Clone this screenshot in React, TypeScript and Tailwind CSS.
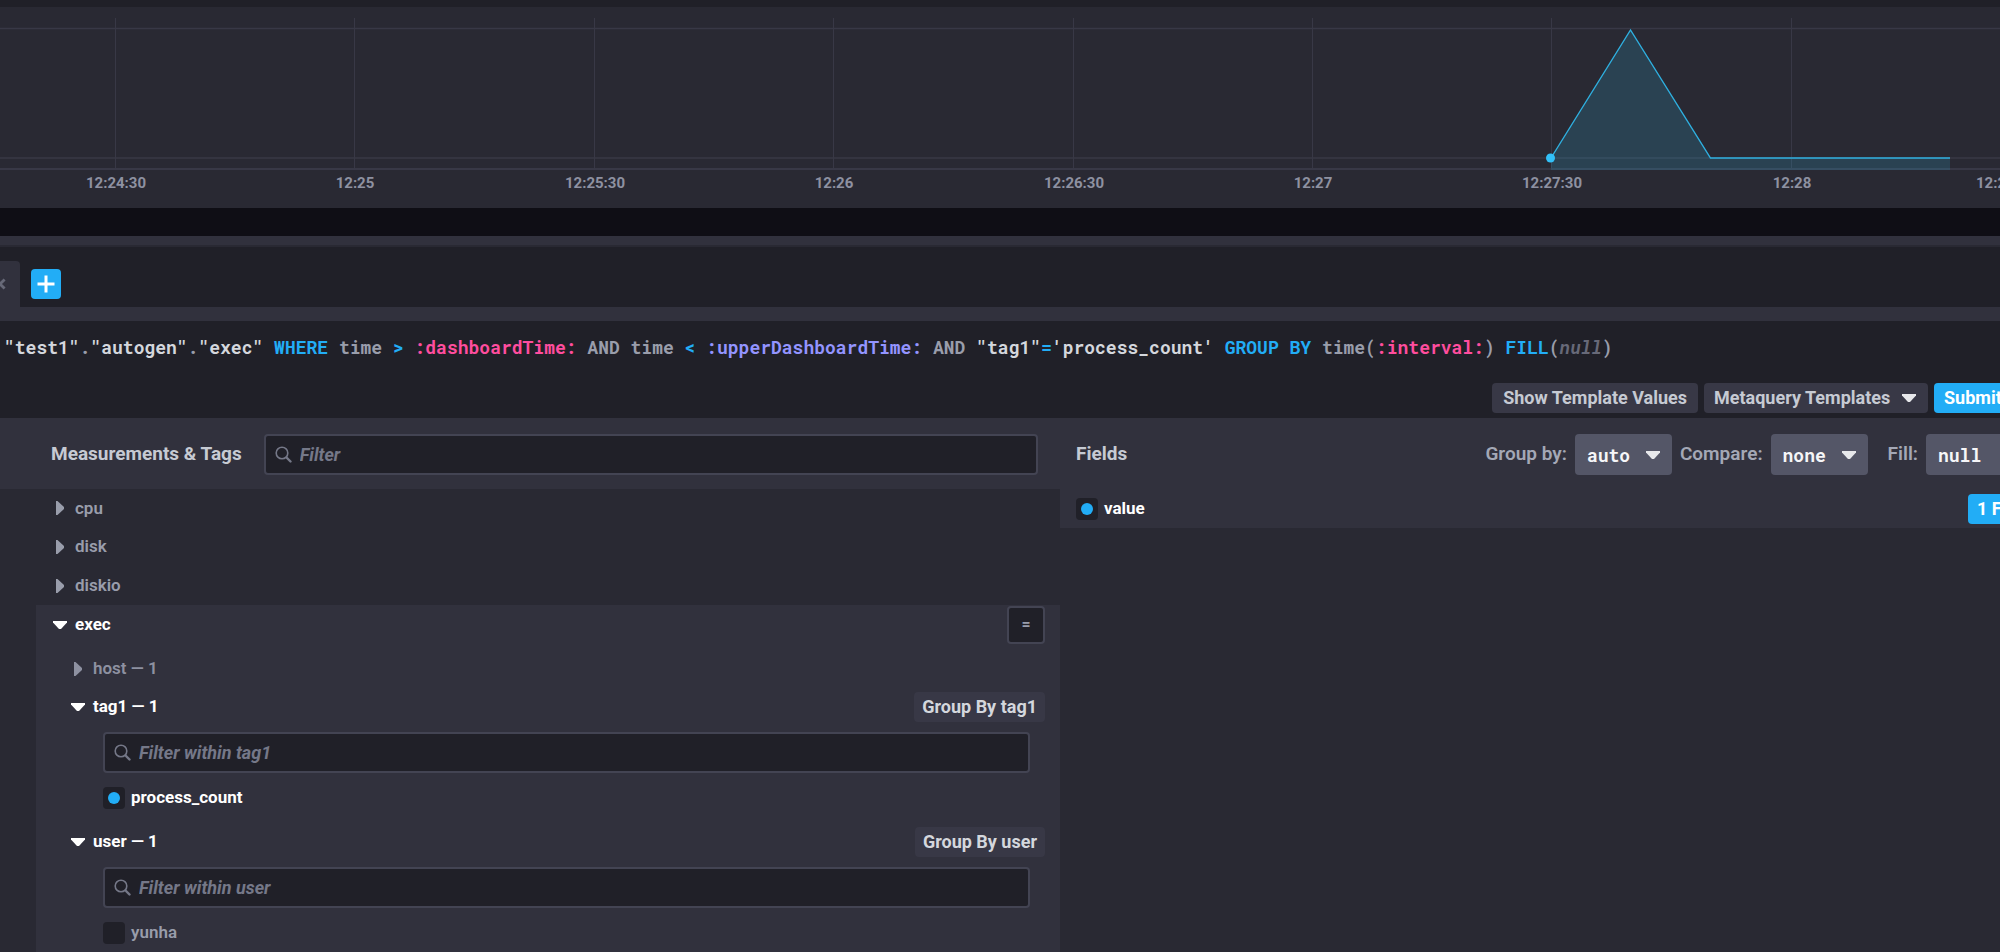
import { useState } from "react";

type Token = {
  text: string;
  style: string;
};

const PLAIN = "text-[#999dab]";
const NAME = "text-[#d4d7dd]";
const KEYWORD = "text-[#22adf6]";
const TEMPLATE = "text-[#ff4d9e]";
const UPPER = "text-[#9394ff]";

const queryTokens: Array<Token> = [
  { text: '"test1"', style: NAME },
  { text: ".", style: PLAIN },
  { text: '"autogen"', style: NAME },
  { text: ".", style: PLAIN },
  { text: '"exec"', style: NAME },
  { text: " WHERE", style: KEYWORD },
  { text: " time", style: PLAIN },
  { text: " > ", style: KEYWORD },
  { text: ":dashboardTime:", style: TEMPLATE },
  { text: " AND time", style: PLAIN },
  { text: " < ", style: KEYWORD },
  { text: ":upperDashboardTime:", style: UPPER },
  { text: " AND ", style: PLAIN },
  { text: '"tag1"', style: NAME },
  { text: "=", style: KEYWORD },
  { text: "'process_count'", style: NAME },
  { text: " GROUP BY", style: KEYWORD },
  { text: " time(", style: PLAIN },
  { text: ":interval:", style: TEMPLATE },
  { text: ")", style: PLAIN },
  { text: " FILL", style: KEYWORD },
  { text: "(", style: PLAIN },
  { text: "null", style: "italic text-[#676978]" },
  { text: ")", style: PLAIN },
];

const ticks = [
  { x: 116, label: "12:24:30" },
  { x: 355, label: "12:25" },
  { x: 595, label: "12:25:30" },
  { x: 834, label: "12:26" },
  { x: 1074, label: "12:26:30" },
  { x: 1313, label: "12:27" },
  { x: 1552, label: "12:27:30" },
  { x: 1792, label: "12:28" },
  { x: 2006, label: "12:28:30" },
];

const measurements = ["cpu", "disk", "diskio"];

const Graph = () => (
  <svg className="block h-[201px] w-full bg-[#292933]" role="img" aria-label="exec value over time">
    <g stroke="#383846" strokeWidth="1">
      {ticks.slice(0, 8).map((tick) => (
        <line key={tick.label} x1={tick.x - 0.5} x2={tick.x - 0.5} y1="11" y2="161" />
      ))}
      <line x1="0" x2="100%" y1="21.5" y2="21.5" strokeWidth="1.4" />
      <line x1="0" x2="100%" y1="151" y2="151" strokeWidth="1.4" />
      <line x1="0" x2="100%" y1="162" y2="162" strokeWidth="2" />
    </g>
    <path d="M1551 151 L1630.5 23 L1710.5 151 H1950 V163 H1551 Z" fill="#32b8e6" fillOpacity="0.18" />
    <path d="M1551 151 L1630.5 23 L1710.5 151 H1950" fill="none" stroke="#2fb0e0" strokeWidth="1.4" />
    <circle cx="1550.5" cy="151" r="4.5" fill="#32c0f8" />
    <g fill="#8e91a1" fontSize="15" fontWeight="700" textAnchor="middle">
      {ticks.map((tick) => (
        <text key={tick.label} x={tick.x} y="181">
          {tick.label}
        </text>
      ))}
    </g>
  </svg>
);

const Caret = ({ open }: { open: boolean }) => (
  <svg className="size-[14px] shrink-0" viewBox="0 0 14 14" fill="currentColor">
    {open ? <path d="M0 3h14v1.5L8 11H6L0 4.5z" /> : <path d="M3 0h1.5L11 6v2l-6.5 6H3z" />}
  </svg>
);

type DropdownProps = {
  label: string;
  options: Array<string>;
  className: string;
};

const Dropdown = ({ label, options, className }: DropdownProps) => (
  <span className="relative inline-flex shrink-0 overflow-hidden">
    <select aria-label={label} className={`appearance-none outline-none ${className}`}>
      {options.map((option) => (
        <option key={option}>{option}</option>
      ))}
    </select>
    <span className="pointer-events-none absolute inset-y-0 right-3 flex items-center text-[#e7e8eb]">
      <Caret open />
    </span>
  </span>
);

const FilterInput = ({ placeholder }: { placeholder: string }) => (
  <label className="flex h-[41px] w-full items-center gap-2 rounded border-2 border-[#434453] bg-[#202028] pl-[9px]">
    <svg className="size-[17px] shrink-0 text-[#757888]" viewBox="0 0 17 17" fill="none" stroke="currentColor">
      <circle cx="7" cy="7" r="5.8" strokeWidth="1.6" />
      <path d="M11.5 11.5l4 4" strokeWidth="2.4" strokeLinecap="round" />
    </svg>
    <input
      type="text"
      aria-label={placeholder}
      placeholder={placeholder}
      className="min-w-0 flex-1 bg-transparent text-lg font-bold text-[#e7e8eb] outline-none placeholder:text-[#757888] placeholder:italic"
    />
  </label>
);

const CheckItem = ({ name, initial }: { name: string; initial: boolean }) => {
  const [checked, setChecked] = useState(initial);

  return (
    <label
      className={`flex items-center gap-[6px] text-[17px] ${checked ? "font-bold text-white" : "font-semibold text-[#999dab]"}`}
    >
      <input
        type="checkbox"
        checked={checked}
        onChange={() => setChecked(!checked)}
        className="grid size-[22px] appearance-none place-content-center rounded bg-[#202028] before:size-3 before:rounded-full checked:before:bg-[#22adf6]"
      />
      {name}
    </label>
  );
};

const TagSection = ({ tag, value, selected }: { tag: string; value: string; selected: boolean }) => (
  <div className="mb-[6px]">
    <div className="flex h-[38px] items-center justify-between pr-[15px] pl-[35px]">
      <button className="flex items-center gap-2 text-[17px] font-bold text-white">
        <Caret open />
        {tag} — 1
      </button>
      <button className="h-[30px] rounded bg-[#383846] px-2 text-lg font-bold text-[#d4d7dd]">
        Group By {tag}
      </button>
    </div>
    <div className="mt-[6px] pr-[30px] pl-[67px]">
      <FilterInput placeholder={`Filter within ${tag}`} />
      <div className="mt-[6px] flex h-[38px] items-center">
        <CheckItem name={value} initial={selected} />
      </div>
    </div>
  </div>
);

const App = () => {
  return (
    <div className="flex h-screen flex-col overflow-hidden bg-[#292933] font-['Roboto',sans-serif] whitespace-nowrap">
      {/* Graph */}
      <div className="shrink-0 bg-[#202028] pt-[7px]">
        <Graph />
      </div>
      <div className="h-7 shrink-0 bg-[#0f0e15]" />
      <div className="h-[11px] shrink-0 border-b-2 border-[#292933] bg-[#31313d]" />

      {/* Query tabs */}
      <div className="flex h-[60px] shrink-0 items-end gap-[11px] bg-[#202028]">
        <button aria-label="Close query" className="flex h-[46px] w-5 items-center rounded-tr bg-[#31313d]">
          <svg className="h-3 w-[6px]" viewBox="0 0 6 12" fill="none" stroke="#676978" strokeWidth="2.8">
            <path d="M4.6 1.5L0 6l4.6 4.5" />
          </svg>
        </button>
        <button
          aria-label="Add query"
          className="mb-2 flex size-[30px] items-center justify-center rounded bg-[#22adf6]"
        >
          <svg className="size-[18px]" viewBox="0 0 18 18" stroke="#fff" strokeWidth="3">
            <path d="M9 .5v17M.5 9h17" />
          </svg>
        </button>
      </div>

      {/* Query editor */}
      <div className="flex h-[111px] shrink-0 flex-col justify-between border-t-14 border-[#31313d] bg-[#202028] pb-[5px]">
        <code className="pt-3 pl-1 font-['Roboto_Mono','Liberation_Mono',monospace] text-lg leading-7 font-bold whitespace-pre">
          {queryTokens.map((token, index) => (
            <span key={index} className={token.style}>
              {token.text}
            </span>
          ))}
        </code>
        <div className="flex items-center justify-end gap-[6px] text-lg font-bold text-[#c6cad3]">
          <button className="h-[30px] rounded bg-[#383846] px-[11px]">Show Template Values</button>
          <Dropdown
            label="Metaquery Templates"
            options={["Metaquery Templates"]}
            className="h-[30px] w-56 rounded bg-[#383846] pl-[10px]"
          />
          <button className="h-[30px] w-[66px] overflow-hidden rounded-l bg-[#22adf6] pl-[10px] text-left text-white">
            Submit Query
          </button>
        </div>
      </div>

      <div className="flex min-h-0 flex-1">
        {/* Measurements and tags */}
        <section className="w-[53%]">
          <div className="flex h-[71px] items-center gap-[22px] bg-[#31313d] pt-0.5 pr-[22px] pl-[51px]">
            <h2 className="text-[19px] font-bold text-[#c6cad3]">Measurements &amp; Tags</h2>
            <FilterInput placeholder="Filter" />
          </div>
          <div className="pl-9">
            <div className="flex h-[116px] flex-col">
              {measurements.map((name) => (
                <button
                  key={name}
                  className="flex flex-1 items-center gap-2 pl-[17px] text-[17px] font-semibold text-[#999dab]"
                >
                  <Caret open={false} />
                  {name}
                </button>
              ))}
            </div>
            <div className="bg-[#31313d]">
              <div className="mb-[6px] flex h-[39px] items-center justify-between pr-[15px] pl-[17px]">
                <button className="flex items-center gap-2 text-[17px] font-bold text-white">
                  <Caret open />
                  exec
                </button>
                <button className="size-[38px] rounded border-2 border-[#434453] bg-[#202028] text-base font-semibold text-[#999dab]">
                  =
                </button>
              </div>
              <button className="flex h-[38px] w-full items-center gap-2 pl-[35px] text-[17px] font-semibold text-[#8e91a1]">
                <Caret open={false} />
                host — 1
              </button>
              <TagSection tag="tag1" value="process_count" selected />
              <TagSection tag="user" value="yunha" selected={false} />
            </div>
          </div>
        </section>

        {/* Fields */}
        <section className="flex-1">
          <div className="flex h-[71px] items-center bg-[#31313d] pt-0.5 pl-4 text-[#a4a8b6]">
            <h2 className="mr-auto text-[19px] font-bold text-[#c6cad3]">Fields</h2>
            <span className="mr-2 text-[19px] font-semibold">Group by:</span>
            <Dropdown
              label="Group by"
              options={["auto"]}
              className="h-[41px] w-[97px] rounded bg-[#545667] pl-3 font-['Roboto_Mono','Liberation_Mono',monospace] text-lg font-bold text-[#f6f6f8]"
            />
            <span className="mr-2 ml-2 text-[19px] font-semibold">Compare:</span>
            <Dropdown
              label="Compare"
              options={["none"]}
              className="h-[41px] w-[97px] rounded bg-[#545667] pl-3 font-['Roboto_Mono','Liberation_Mono',monospace] text-lg font-bold text-[#f6f6f8]"
            />
            <label htmlFor="fill" className="mr-2 ml-5 text-[19px] font-semibold">
              Fill:
            </label>
            <select
              id="fill"
              className="h-[41px] w-[74px] appearance-none rounded-l bg-[#545667] pl-3 font-['Roboto_Mono','Liberation_Mono',monospace] text-lg font-bold text-[#f6f6f8]"
            >
              <option>null</option>
            </select>
          </div>
          <div className="flex h-[39px] items-center justify-between bg-[#31313d] pl-4">
            <CheckItem name="value" initial />
            <button className="h-[30px] w-8 overflow-hidden rounded-l bg-[#22adf6] pl-[9px] text-left text-lg font-bold text-white">
              1 Function
            </button>
          </div>
        </section>
      </div>
    </div>
  );
};

export default App;
